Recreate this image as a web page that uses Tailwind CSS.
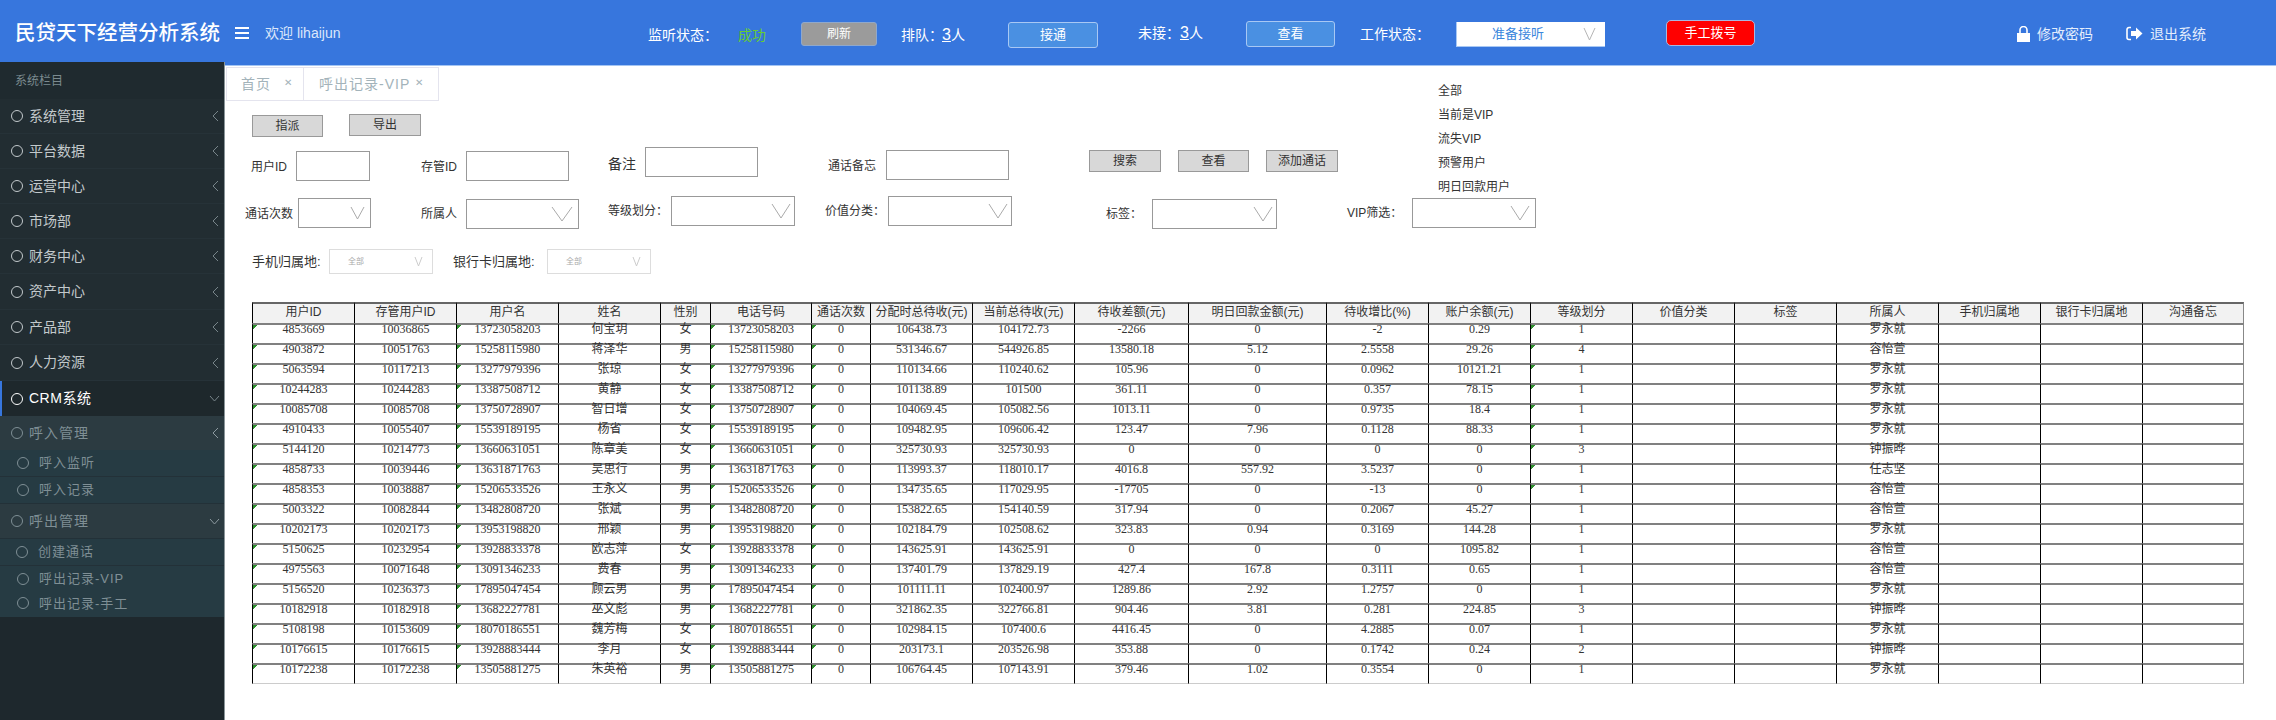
<!DOCTYPE html>
<html lang="en">
<head>
<meta charset="UTF-8">
<title>民贷天下经营分析系统</title>
<script src="https://cdn.jsdelivr.net/npm/@tailwindcss/browser@4"></script>
</head>
<body class="w-[2276px] h-[720px] overflow-hidden bg-white text-[#333] font-['Liberation_Sans','Noto_Sans_CJK_SC',sans-serif]">

<!-- top bar -->
<header class="h-[66px] bg-[#3776dd] border-b border-b-[#a3c4f3] flex items-start text-white text-[14px]">
  <div class="ml-[15px] mt-[19px] w-[206px] text-[20.5px] leading-[28px] font-medium whitespace-nowrap">民贷天下经营分析系统</div>
  <div class="ml-[14px] mt-[27px] w-[14px] h-[12px] flex flex-col justify-between">
    <i class="block h-[2px] bg-white"></i><i class="block h-[2px] bg-white"></i><i class="block h-[2px] bg-white"></i>
  </div>
  <div class="ml-[16px] mt-[23px] w-[383px] text-[#dbe7fb] leading-[20px]">欢迎 lihaijun</div>
  <div class="mt-[25px] w-[90px] leading-[20px] whitespace-nowrap">监听状态：</div>
  <div class="mt-[25px] w-[63px] leading-[20px] text-[#66cc33]">成功</div>
  <button class="mt-[22px] w-[76px] h-[24px] bg-[#9b9b9b] border border-[#8fa8cc] rounded-[3px] text-[12px] text-white">刷新</button>
  <div class="ml-[24px] mt-[25px] w-[41px] leading-[20px] whitespace-nowrap">排队：</div>
  <div class="mt-[25px] w-[66px] leading-[20px] whitespace-nowrap"><span class="underline text-[16px]">3</span>人</div>
  <button class="mt-[22px] w-[90px] h-[26px] bg-[#4a90e2] border border-[#a8c8f4] rounded-[3px] text-[13px] text-white">接通</button>
  <div class="ml-[40px] mt-[23px] w-[42px] leading-[20px] whitespace-nowrap">未接：</div>
  <div class="mt-[23px] w-[66px] leading-[20px] whitespace-nowrap"><span class="underline text-[16px]">3</span>人</div>
  <button class="mt-[21px] w-[89px] h-[26px] bg-[#4a90e2] border border-[#a8c8f4] rounded-[3px] text-[13px] text-white">查看</button>
  <div class="ml-[25px] mt-[24px] w-[96px] leading-[20px] whitespace-nowrap">工作状态：</div>
  <div class="mt-[22px] w-[149px] h-[25px] bg-white border-b border-l border-[#a8c8f4] flex items-center text-[13px] text-[#3a86dc]">
    <span class="ml-[35px] w-[91px]">准备接听</span>
    <svg class="w-[13px] h-[14px]" viewBox="0 0 13 14" fill="none" stroke="#b5b5b5"><path d="M1 1 L6.5 13 L12 1"/></svg>
  </div>
  <button class="ml-[61px] mt-[20px] w-[89px] h-[26px] bg-[#ff0000] border border-[#a8b8e0] rounded-[5px] text-[13px] text-white">手工拨号</button>
  <svg class="ml-[262px] mt-[26px] w-[13px] h-[16px]" viewBox="0 0 13 16" fill="#fff"><path d="M0 7h13v9H0z"/><path d="M3 7V4a3.5 3.5 0 0 1 7 0v3" fill="none" stroke="#fff" stroke-width="1.6"/></svg>
  <div class="ml-[7px] mt-[24px] w-[89px] leading-[20px] text-[#e3edfc]">修改密码</div>
  <svg class="mt-[26px] w-[17px] h-[15px]" viewBox="0 0 17 15" fill="#fff"><path d="M5 1.5H3A2 2 0 0 0 1 3.500v8a2 2 0 0 0 2 2h2" fill="none" stroke="#fff" stroke-width="1.6"/><path d="M5 5h5V1.500l6.500 6-6.500 6V10H5z"/></svg>
  <div class="ml-[7px] mt-[24px] leading-[20px] text-[#e3edfc] whitespace-nowrap">退出系统</div>
</header>

<div class="flex h-[654px]">
  <!-- side menu -->
  <aside class="relative z-10 -mt-[4px] w-[225px] h-[658px] shrink-0 bg-[#1e282d] border-r border-r-[#8a9599] text-[14px] text-[#c2c9cc]">
    <div class="h-[37px] pl-[15px] flex items-center bg-[#1f2a2f] text-[12px] text-[#7b8a8f]">系统栏目</div>
    <nav class="bg-[#222d32]">
      <a class="h-[35px] pl-[11px] flex items-center gap-[6px] border-b border-b-[#263238]"><i class="w-[12px] h-[12px] rounded-full border border-[#c2c9cc]"></i><span class="w-[177px]">系统管理</span><svg class="w-[7px] h-[12px]" viewBox="0 0 7 12" fill="none" stroke="#78858a"><path d="M6 1 L1 6 L6 11"/></svg></a>
      <a class="h-[35px] pl-[11px] flex items-center gap-[6px] border-b border-b-[#263238]"><i class="w-[12px] h-[12px] rounded-full border border-[#c2c9cc]"></i><span class="w-[177px]">平台数据</span><svg class="w-[7px] h-[12px]" viewBox="0 0 7 12" fill="none" stroke="#78858a"><path d="M6 1 L1 6 L6 11"/></svg></a>
      <a class="h-[35px] pl-[11px] flex items-center gap-[6px] border-b border-b-[#263238]"><i class="w-[12px] h-[12px] rounded-full border border-[#c2c9cc]"></i><span class="w-[177px]">运营中心</span><svg class="w-[7px] h-[12px]" viewBox="0 0 7 12" fill="none" stroke="#78858a"><path d="M6 1 L1 6 L6 11"/></svg></a>
      <a class="h-[35px] pl-[11px] flex items-center gap-[6px] border-b border-b-[#263238]"><i class="w-[12px] h-[12px] rounded-full border border-[#c2c9cc]"></i><span class="w-[177px]">市场部</span><svg class="w-[7px] h-[12px]" viewBox="0 0 7 12" fill="none" stroke="#78858a"><path d="M6 1 L1 6 L6 11"/></svg></a>
      <a class="h-[35px] pl-[11px] flex items-center gap-[6px] border-b border-b-[#263238]"><i class="w-[12px] h-[12px] rounded-full border border-[#c2c9cc]"></i><span class="w-[177px]">财务中心</span><svg class="w-[7px] h-[12px]" viewBox="0 0 7 12" fill="none" stroke="#78858a"><path d="M6 1 L1 6 L6 11"/></svg></a>
      <a class="h-[36px] pl-[11px] flex items-center gap-[6px] border-b border-b-[#263238]"><i class="w-[12px] h-[12px] rounded-full border border-[#c2c9cc]"></i><span class="w-[177px]">资产中心</span><svg class="w-[7px] h-[12px]" viewBox="0 0 7 12" fill="none" stroke="#78858a"><path d="M6 1 L1 6 L6 11"/></svg></a>
      <a class="h-[35px] pl-[11px] flex items-center gap-[6px] border-b border-b-[#263238]"><i class="w-[12px] h-[12px] rounded-full border border-[#c2c9cc]"></i><span class="w-[177px]">产品部</span><svg class="w-[7px] h-[12px]" viewBox="0 0 7 12" fill="none" stroke="#78858a"><path d="M6 1 L1 6 L6 11"/></svg></a>
      <a class="h-[36px] pl-[11px] flex items-center gap-[6px] border-b border-b-[#263238]"><i class="w-[12px] h-[12px] rounded-full border border-[#c2c9cc]"></i><span class="w-[177px]">人力资源</span><svg class="w-[7px] h-[12px]" viewBox="0 0 7 12" fill="none" stroke="#78858a"><path d="M6 1 L1 6 L6 11"/></svg></a>
      <a class="h-[35px] pl-[9px] flex items-center gap-[6px] bg-[#1e282c] border-l-2 border-l-[#3776dd] text-white"><i class="w-[12px] h-[12px] rounded-full border border-white"></i><span class="w-[174px] tracking-[0.5px]">CRM系统</span><svg class="w-[11px] h-[7px]" viewBox="0 0 11 7" fill="none" stroke="#78858a"><path d="M1 1 L5.500 6 L10 1"/></svg></a>
    </nav>
    <div class="bg-[#2c3b41] text-[#7f8f95]">
      <a class="h-[34px] pl-[11px] flex items-center gap-[6px]"><i class="w-[12px] h-[12px] rounded-full border border-[#7f8f95]"></i><span class="w-[177px] tracking-[1px]">呼入管理</span><svg class="w-[7px] h-[12px]" viewBox="0 0 7 12" fill="none" stroke="#8d9aa0"><path d="M6 1 L1 6 L6 11"/></svg></a>
      <div class="bg-[#263b43] text-[13px]">
        <a class="h-[27px] pl-[17px] flex items-center gap-[10px] border-b border-b-[#233138]"><i class="w-[12px] h-[12px] rounded-full border border-[#7f8f95]"></i><span class="tracking-[1px]">呼入监听</span></a>
        <a class="h-[27px] pl-[17px] flex items-center gap-[10px] border-b border-b-[#233138]"><i class="w-[12px] h-[12px] rounded-full border border-[#7f8f95]"></i><span class="tracking-[1px]">呼入记录</span></a>
      </div>
      <a class="h-[35px] pl-[11px] flex items-center gap-[6px] border-b border-b-[#233138]"><i class="w-[12px] h-[12px] rounded-full border border-[#7f8f95]"></i><span class="w-[174px] tracking-[1px]">呼出管理</span><svg class="w-[11px] h-[7px]" viewBox="0 0 11 7" fill="none" stroke="#8d9aa0"><path d="M1 1 L5.500 6 L10 1"/></svg></a>
      <div class="bg-[#263b43] text-[13px]">
        <a class="h-[27px] pl-[16px] flex items-center gap-[10px] border-b border-b-[#233138]"><i class="w-[12px] h-[12px] rounded-full border border-[#7f8f95]"></i><span class="tracking-[1px]">创建通话</span></a>
        <a class="h-[26px] pl-[17px] flex items-center gap-[10px]"><i class="w-[12px] h-[12px] rounded-full border border-[#7f8f95]"></i><span class="tracking-[1px]">呼出记录-VIP</span></a>
        <a class="h-[25px] pl-[17px] flex items-start pt-[2px] gap-[10px]"><i class="w-[12px] h-[12px] mt-[3px] rounded-full border border-[#7f8f95]"></i><span class="tracking-[1px]">呼出记录-手工</span></a>
      </div>
    </div>
  </aside>

  <main class="relative flex-1 min-w-0">
    <!-- tabs -->
    <div class="mt-[1px] ml-[1px] h-[34px] flex text-[14px] text-[#a3b3ba] border border-[#e4e4ee] w-[213px]">
      <div class="w-[77px] border-r border-r-[#e4e4ee] flex items-center pl-[14px] tracking-[1px]">首页<span class="ml-[13px] -mt-[4px] text-[10px]">✕</span></div>
      <div class="flex-1 flex items-center pl-[15px] tracking-[1px] whitespace-nowrap">呼出记录-VIP<span class="ml-[5px] -mt-[4px] text-[10px]">✕</span></div>
    </div>

    <!-- filters -->
    <div class="mt-[13px] pl-[27px] flex items-start text-[12px]">
      <button class="mt-[1px] w-[71px] h-[22px] bg-[#d8d8d8] border border-[#999]">指派</button>
      <button class="ml-[26px] w-[72px] h-[22px] bg-[#d8d8d8] border border-[#999]">导出</button>
    </div>

    <div class="mt-[10px] h-[36px] pl-[26px] flex items-start text-[12px]">
      <label class="mt-[5px] w-[45px] h-[30px] flex items-center">用户ID</label>
      <input class="mt-[4px] w-[74px] h-[30px] border border-[#999]">
      <label class="ml-[51px] mt-[5px] w-[45px] h-[30px] flex items-center">存管ID</label>
      <input class="mt-[4px] w-[103px] h-[30px] border border-[#999]">
      <label class="ml-[39px] mt-[2px] w-[37px] h-[30px] flex items-center text-[14px]">备注</label>
      <input class="w-[113px] h-[30px] border border-[#999]">
      <label class="ml-[70px] mt-[4px] w-[58px] h-[30px] flex items-center">通话备忘</label>
      <input class="mt-[3px] w-[123px] h-[30px] border border-[#999]">
      <button class="ml-[80px] mt-[3px] w-[72px] h-[22px] bg-[#d8d8d8] border border-[#999]">搜索</button>
      <button class="ml-[17px] mt-[3px] w-[71px] h-[22px] bg-[#d8d8d8] border border-[#999]">查看</button>
      <button class="ml-[17px] mt-[3px] w-[72px] h-[22px] bg-[#d8d8d8] border border-[#999]">添加通话</button>
    </div>

    <div class="mt-[13px] h-[34px] pl-[20px] flex items-start text-[12px]">
      <label class="mt-[3px] w-[53px] h-[30px] flex items-center">通话次数</label>
      <div class="mt-[2px] w-[73px] h-[30px] border border-[#999] flex items-center justify-end pr-[5px]"><svg class="w-[15px] h-[14px]" viewBox="0 0 15 14" fill="none" stroke="#aaa"><path d="M1 1 L7.500 13 L14 1"/></svg></div>
      <label class="ml-[50px] mt-[3px] w-[45px] h-[30px] flex items-center">所属人</label>
      <div class="mt-[3px] w-[113px] h-[30px] border border-[#999] flex items-center justify-end pr-[5px]"><svg class="w-[22px] h-[16px]" viewBox="0 0 22 16" fill="none" stroke="#aaa"><path d="M1 1 L11 15 L21 1"/></svg></div>
      <label class="ml-[29px] w-[63px] h-[30px] flex items-center">等级划分：</label>
      <div class="w-[124px] h-[30px] border border-[#999] flex items-center justify-end pr-[3px]"><svg class="w-[20px] h-[16px]" viewBox="0 0 20 16" fill="none" stroke="#aaa"><path d="M1 1 L10 15 L19 1"/></svg></div>
      <label class="ml-[30px] w-[63px] h-[30px] flex items-center">价值分类：</label>
      <div class="w-[124px] h-[30px] border border-[#999] flex items-center justify-end pr-[3px]"><svg class="w-[20px] h-[16px]" viewBox="0 0 20 16" fill="none" stroke="#aaa"><path d="M1 1 L10 15 L19 1"/></svg></div>
      <label class="ml-[94px] mt-[3px] w-[46px] h-[30px] flex items-center">标签：</label>
      <div class="mt-[3px] w-[125px] h-[30px] border border-[#999] flex items-center justify-end pr-[3px]"><svg class="w-[20px] h-[16px]" viewBox="0 0 20 16" fill="none" stroke="#aaa"><path d="M1 1 L10 15 L19 1"/></svg></div>
      <label class="ml-[70px] mt-[2px] w-[65px] h-[30px] flex items-center">VIP筛选：</label>
      <div class="mt-[2px] w-[124px] h-[30px] border border-[#999] flex items-center justify-end pr-[5px]"><svg class="w-[20px] h-[16px]" viewBox="0 0 20 16" fill="none" stroke="#aaa"><path d="M1 1 L10 15 L19 1"/></svg></div>
    </div>

    <div class="mt-[19px] h-[26px] pl-[27px] flex items-start text-[13px]">
      <label class="w-[77px] h-[26px] flex items-center">手机归属地:</label>
      <div class="w-[104px] h-[25px] border border-[#ddd] flex items-center text-[8px] text-[#aaa] pl-[18px]"><span class="w-[66px]">全部</span><svg class="w-[9px] h-[9px]" viewBox="0 0 9 9" fill="none" stroke="#ccc"><path d="M1 0 L4.500 9 L8 0"/></svg></div>
      <label class="ml-[20px] w-[94px] h-[26px] flex items-center">银行卡归属地:</label>
      <div class="w-[104px] h-[25px] border border-[#ddd] flex items-center text-[8px] text-[#aaa] pl-[18px]"><span class="w-[66px]">全部</span><svg class="w-[9px] h-[9px]" viewBox="0 0 9 9" fill="none" stroke="#ccc"><path d="M1 0 L4.500 9 L8 0"/></svg></div>
    </div>

    <!-- VIP filter options -->
    <ul class="absolute left-[1213px] top-[13px] text-[12px] leading-[24px] whitespace-nowrap">
      <li>全部</li><li>当前是VIP</li><li>流失VIP</li><li>预警用户</li><li>明日回款用户</li>
    </ul>

    <table class="mt-[27px] ml-[27px] w-[1992px] table-fixed border-separate border-spacing-0 text-center text-[12px] font-['Liberation_Serif','Noto_Sans_CJK_SC',serif] [&_th]:h-[21px] [&_th]:pb-[4px] [&_th]:bg-[#f2f2f2] [&_th]:font-normal [&_th]:leading-[14px] [&_th]:font-['Liberation_Sans','Noto_Sans_CJK_SC',sans-serif] [&_th]:border-t-2 [&_th]:border-t-[#666] [&_th]:border-l [&_th]:border-l-black [&_th:last-child]:border-r [&_th:last-child]:border-r-[#888] [&_td]:h-[20px] [&_td]:align-top [&_td]:leading-[9px] [&_td]:border-t-2 [&_td]:border-t-[#808080] [&_td]:border-l [&_td]:border-l-black [&_td:last-child]:border-r [&_td:last-child]:border-r-[#888] [&_tr:last-child_td]:border-b [&_tr:last-child_td]:border-b-[#ccc] [&_tr:last-child_td]:h-[21px] [&_td:nth-child(1)]:bg-[linear-gradient(135deg,#2f8f2f_3px,transparent_3px)] [&_td:nth-child(3)]:bg-[linear-gradient(135deg,#2f8f2f_3px,transparent_3px)] [&_td:nth-child(6)]:bg-[linear-gradient(135deg,#2f8f2f_3px,transparent_3px)] [&_td:nth-child(7)]:bg-[linear-gradient(135deg,#2f8f2f_3px,transparent_3px)] [&_tbody_tr:nth-child(-n+9)_td:nth-child(14)]:bg-[linear-gradient(135deg,#2f8f2f_3px,transparent_3px)]">
      <colgroup>
        <col class="w-[102px]"><col class="w-[102px]"><col class="w-[102px]"><col class="w-[102px]"><col class="w-[50px]"><col class="w-[101px]"><col class="w-[59px]"><col class="w-[102px]"><col class="w-[102px]"><col class="w-[114px]"><col class="w-[138px]"><col class="w-[102px]"><col class="w-[102px]"><col class="w-[102px]"><col class="w-[102px]"><col class="w-[102px]"><col class="w-[102px]"><col class="w-[102px]"><col class="w-[102px]"><col class="w-[102px]">
      </colgroup>
      <thead>
        <tr><th>用户ID</th><th>存管用户ID</th><th>用户名</th><th>姓名</th><th>性别</th><th>电话号码</th><th>通话次数</th><th>分配时总待收(元)</th><th>当前总待收(元)</th><th>待收差额(元)</th><th>明日回款金额(元)</th><th>待收增比(%)</th><th>账户余额(元)</th><th>等级划分</th><th>价值分类</th><th>标签</th><th>所属人</th><th>手机归属地</th><th>银行卡归属地</th><th>沟通备忘</th></tr>
      </thead>
      <tbody>
        <tr><td>4853669</td><td>10036865</td><td>13723058203</td><td>何宝玥</td><td>女</td><td>13723058203</td><td>0</td><td>106438.73</td><td>104172.73</td><td>-2266</td><td>0</td><td>-2</td><td>0.29</td><td>1</td><td></td><td></td><td>罗永就</td><td></td><td></td><td></td></tr>
        <tr><td>4903872</td><td>10051763</td><td>15258115980</td><td>蒋泽华</td><td>男</td><td>15258115980</td><td>0</td><td>531346.67</td><td>544926.85</td><td>13580.18</td><td>5.12</td><td>2.5558</td><td>29.26</td><td>4</td><td></td><td></td><td>容怡萱</td><td></td><td></td><td></td></tr>
        <tr><td>5063594</td><td>10117213</td><td>13277979396</td><td>张琼</td><td>女</td><td>13277979396</td><td>0</td><td>110134.66</td><td>110240.62</td><td>105.96</td><td>0</td><td>0.0962</td><td>10121.21</td><td>1</td><td></td><td></td><td>罗永就</td><td></td><td></td><td></td></tr>
        <tr><td>10244283</td><td>10244283</td><td>13387508712</td><td>黄静</td><td>女</td><td>13387508712</td><td>0</td><td>101138.89</td><td>101500</td><td>361.11</td><td>0</td><td>0.357</td><td>78.15</td><td>1</td><td></td><td></td><td>罗永就</td><td></td><td></td><td></td></tr>
        <tr><td>10085708</td><td>10085708</td><td>13750728907</td><td>智日增</td><td>女</td><td>13750728907</td><td>0</td><td>104069.45</td><td>105082.56</td><td>1013.11</td><td>0</td><td>0.9735</td><td>18.4</td><td>1</td><td></td><td></td><td>罗永就</td><td></td><td></td><td></td></tr>
        <tr><td>4910433</td><td>10055407</td><td>15539189195</td><td>杨省</td><td>女</td><td>15539189195</td><td>0</td><td>109482.95</td><td>109606.42</td><td>123.47</td><td>7.96</td><td>0.1128</td><td>88.33</td><td>1</td><td></td><td></td><td>罗永就</td><td></td><td></td><td></td></tr>
        <tr><td>5144120</td><td>10214773</td><td>13660631051</td><td>陈章美</td><td>女</td><td>13660631051</td><td>0</td><td>325730.93</td><td>325730.93</td><td>0</td><td>0</td><td>0</td><td>0</td><td>3</td><td></td><td></td><td>钟振晔</td><td></td><td></td><td></td></tr>
        <tr><td>4858733</td><td>10039446</td><td>13631871763</td><td>吴思行</td><td>男</td><td>13631871763</td><td>0</td><td>113993.37</td><td>118010.17</td><td>4016.8</td><td>557.92</td><td>3.5237</td><td>0</td><td>1</td><td></td><td></td><td>任志坚</td><td></td><td></td><td></td></tr>
        <tr><td>4858353</td><td>10038887</td><td>15206533526</td><td>王永义</td><td>男</td><td>15206533526</td><td>0</td><td>134735.65</td><td>117029.95</td><td>-17705</td><td>0</td><td>-13</td><td>0</td><td>1</td><td></td><td></td><td>容怡萱</td><td></td><td></td><td></td></tr>
        <tr><td>5003322</td><td>10082844</td><td>13482808720</td><td>张斌</td><td>男</td><td>13482808720</td><td>0</td><td>153822.65</td><td>154140.59</td><td>317.94</td><td>0</td><td>0.2067</td><td>45.27</td><td>1</td><td></td><td></td><td>容怡萱</td><td></td><td></td><td></td></tr>
        <tr><td>10202173</td><td>10202173</td><td>13953198820</td><td>邢颖</td><td>男</td><td>13953198820</td><td>0</td><td>102184.79</td><td>102508.62</td><td>323.83</td><td>0.94</td><td>0.3169</td><td>144.28</td><td>1</td><td></td><td></td><td>罗永就</td><td></td><td></td><td></td></tr>
        <tr><td>5150625</td><td>10232954</td><td>13928833378</td><td>欧志萍</td><td>女</td><td>13928833378</td><td>0</td><td>143625.91</td><td>143625.91</td><td>0</td><td>0</td><td>0</td><td>1095.82</td><td>1</td><td></td><td></td><td>容怡萱</td><td></td><td></td><td></td></tr>
        <tr><td>4975563</td><td>10071648</td><td>13091346233</td><td>费春</td><td>男</td><td>13091346233</td><td>0</td><td>137401.79</td><td>137829.19</td><td>427.4</td><td>167.8</td><td>0.3111</td><td>0.65</td><td>1</td><td></td><td></td><td>容怡萱</td><td></td><td></td><td></td></tr>
        <tr><td>5156520</td><td>10236373</td><td>17895047454</td><td>顾云男</td><td>男</td><td>17895047454</td><td>0</td><td>101111.11</td><td>102400.97</td><td>1289.86</td><td>2.92</td><td>1.2757</td><td>0</td><td>1</td><td></td><td></td><td>罗永就</td><td></td><td></td><td></td></tr>
        <tr><td>10182918</td><td>10182918</td><td>13682227781</td><td>巫文彪</td><td>男</td><td>13682227781</td><td>0</td><td>321862.35</td><td>322766.81</td><td>904.46</td><td>3.81</td><td>0.281</td><td>224.85</td><td>3</td><td></td><td></td><td>钟振晔</td><td></td><td></td><td></td></tr>
        <tr><td>5108198</td><td>10153609</td><td>18070186551</td><td>魏芳梅</td><td>女</td><td>18070186551</td><td>0</td><td>102984.15</td><td>107400.6</td><td>4416.45</td><td>0</td><td>4.2885</td><td>0.07</td><td>1</td><td></td><td></td><td>罗永就</td><td></td><td></td><td></td></tr>
        <tr><td>10176615</td><td>10176615</td><td>13928883444</td><td>李月</td><td>女</td><td>13928883444</td><td>0</td><td>203173.1</td><td>203526.98</td><td>353.88</td><td>0</td><td>0.1742</td><td>0.24</td><td>2</td><td></td><td></td><td>钟振晔</td><td></td><td></td><td></td></tr>
        <tr><td>10172238</td><td>10172238</td><td>13505881275</td><td>朱英裕</td><td>男</td><td>13505881275</td><td>0</td><td>106764.45</td><td>107143.91</td><td>379.46</td><td>1.02</td><td>0.3554</td><td>0</td><td>1</td><td></td><td></td><td>罗永就</td><td></td><td></td><td></td></tr>
      </tbody>
    </table>
  </main>
</div>
</body>
</html>
